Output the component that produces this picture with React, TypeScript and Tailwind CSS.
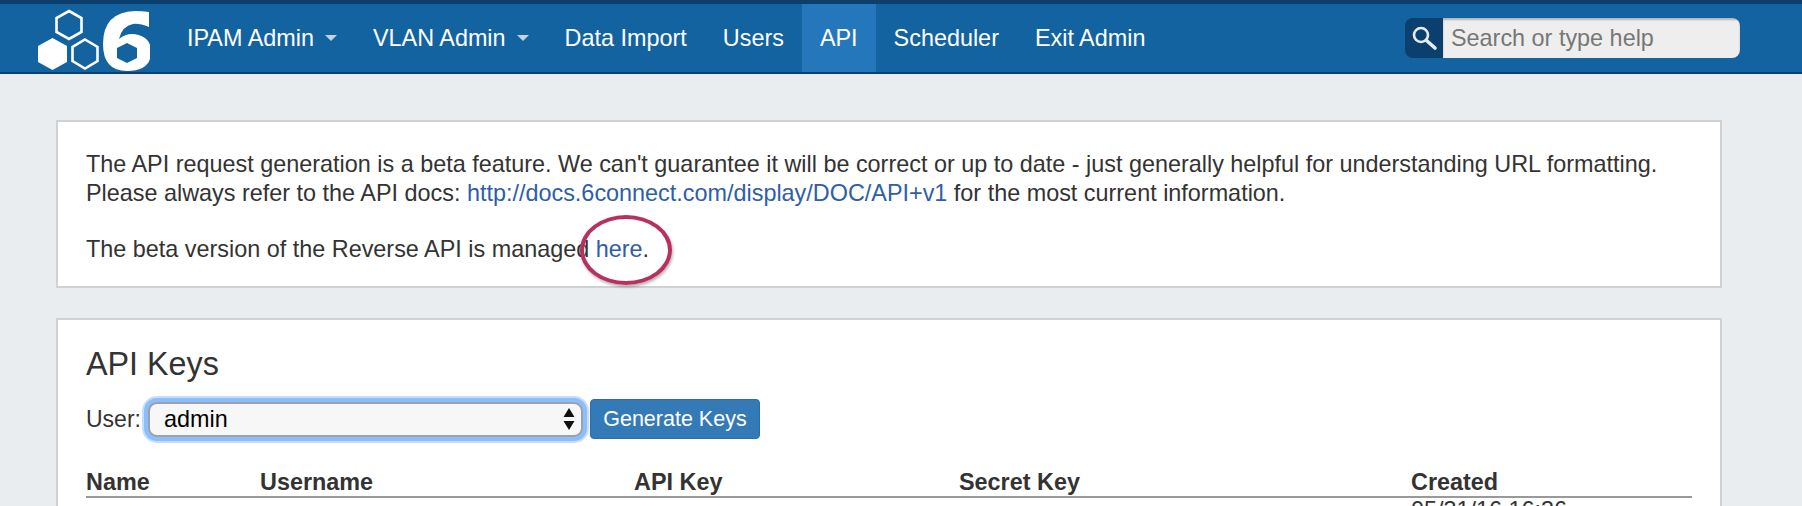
const navItems = [
  { label: "IPAM Admin", caret: true },
  { label: "VLAN Admin", caret: true },
  { label: "Data Import" },
  { label: "Users" },
  { label: "API", active: true },
  { label: "Scheduler" },
  { label: "Exit Admin" },
];

const Logo = () => (
  <svg width="112" height="62" viewBox="0 0 112 62" className="shrink-0">
    <polygon points="31,2 43.5,9 43.5,23 31,30 18.5,23 18.5,9" fill="none" stroke="#fff" strokeWidth="2.6" />
    <polygon points="14.5,29 29,37 29,53 14.5,61 0,53 0,37" fill="#fff" />
    <polygon points="47,30.5 59.5,38 59.5,52 47,59.5 34.5,52 34.5,38" fill="none" stroke="#fff" strokeWidth="2.6" />
    <path
      fillRule="evenodd"
      fill="#fff"
      d="M111 3 L111 18 Q101 14 95 15 Q84 17 81 30 Q87 25 94 25 Q113 26 113 43 Q113 62 89 62 Q65 62 65 35 Q65 3 97 2 Q104 2 111 3 Z M89 34 L99 39 L99 49 L89 54 L79 49 L79 39 Z"
    />
  </svg>
);

export default function App() {
  return (
    <div className="h-[506px] overflow-hidden bg-[#e9edf0] font-['Liberation_Sans',Arial,sans-serif] text-[23.4px] leading-[29px] text-[#333]">
      <nav className="flex h-[74px] items-stretch border-t-4 border-b-2 border-t-[#0b3f6e] border-b-[#0b3f6e] bg-[#12639f] pl-[38px] pr-[62px] text-white">
        <div className="flex items-center pr-[19px] pt-1">
          <Logo />
        </div>
        <ul className="flex items-stretch">
          {navItems.map((item) => (
            <li
              key={item.label}
              className={`flex items-center px-[18px] ${item.active ? "bg-[#2477bb]" : ""}`}
            >
              {item.label}
              {item.caret && (
                <span className="ml-[11px] h-0 w-0 border-x-[6px] border-t-[6px] border-x-transparent border-t-[#c5d3df]" />
              )}
            </li>
          ))}
        </ul>
        <div className="ml-auto flex items-center">
          <div className="flex h-10 w-[335px] overflow-hidden rounded-lg">
            <div className="flex w-[38px] items-center justify-center bg-[#0b3f6e]">
              <svg width="28" height="28" viewBox="0 0 28 28" fill="none">
                <circle cx="11" cy="11" r="7" stroke="#e4edf3" strokeWidth="2.6" />
                <path d="M16.5 16.5 L25 24" stroke="#e4edf3" strokeWidth="3.6" strokeLinecap="round" />
              </svg>
            </div>
            <div className="flex flex-1 items-center bg-[#eeeeee] pl-2 text-[#777] shadow-[inset_0_2px_2px_rgba(0,0,0,0.25)]">
              Search or type help
            </div>
          </div>
        </div>
      </nav>

      <main className="mx-[56px] w-[1666px] pt-[46px]">
        <section className="relative h-[168px] border-2 border-[#cfd1d3] bg-white px-[28px] pt-[28px]">
          <p>
            The API request generation is a beta feature. We can't guarantee it will be correct or up to date - just generally helpful for understanding URL formatting.
            <br />
            Please always refer to the API docs:{" "}
            <a className="text-[#2f5ea8]">http://docs.6connect.com/display/DOC/API+v1</a> for the most current information.
          </p>
          <p className="mt-[27px]">
            The beta version of the Reverse API is managed <a className="text-[#2f5ea8]">here</a>.
          </p>
          <div className="absolute left-[522px] top-[93px] h-[70px] w-[92px] rounded-[50%] border-[4px] border-[#b9305f] shadow-[1px_2px_3px_rgba(0,0,0,0.3)]" />
        </section>

        <section className="mt-[30px] h-[300px] border-2 border-[#cfd1d3] bg-white px-[28px] pt-[26px]">
          <h2 className="text-[32.3px] leading-[37px]">API Keys</h2>
          <div className="mt-[16px] flex items-center">
            <span className="text-[23px]">User:</span>
            <div className="ml-[7px] flex h-[35px] w-[435px] items-center rounded-[9px] border-2 border-[#9aa2ab] bg-[#f7f7f7] pl-[14px] pr-[6px] text-black shadow-[0_0_0_4px_#8dbdfb,0_0_0_6px_#c4defd]">
              admin
              <svg width="12" height="26" viewBox="0 0 12 26" className="ml-auto">
                <path d="M6 2 L11.5 11 L0.5 11 Z M6 24 L0.5 15 L11.5 15 Z" fill="#111" />
              </svg>
            </div>
            <div className="ml-[7px] flex h-10 w-[170px] items-center justify-center rounded-[4px] border border-[#2e6da4] bg-[#337ab7] text-[21.5px] text-white">
              Generate Keys
            </div>
          </div>
          <div className="mt-[29px] grid h-[30px] grid-cols-[174px_374px_325px_452px_1fr] border-b-2 border-[#999] font-bold">
            <span>Name</span>
            <span>Username</span>
            <span>API Key</span>
            <span>Secret Key</span>
            <span>Created</span>
          </div>
          <div className="-mt-[2px] grid grid-cols-[1325px_1fr]">
            <span />
            <span>05/31/16 16:36</span>
          </div>
        </section>
      </main>
    </div>
  );
}
